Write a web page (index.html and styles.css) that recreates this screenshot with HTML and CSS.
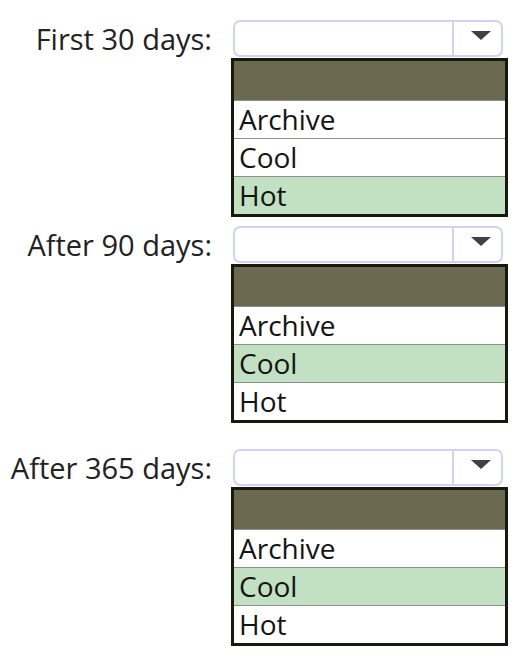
FILE: index.html
```html
<!DOCTYPE html>
<html lang="en">
<head>
    <meta charset="UTF-8">
    <meta name="viewport" content="width=device-width, initial-scale=1.0">
    <title>Storage Tiers</title>
    <link rel="stylesheet" href="styles.css">
</head>
<body>
    <div class="form">
        <div class="field">
            <span class="label">First 30 days:</span>
            <div class="control">
                <div class="select">
                    <span class="value"></span>
                    <span class="arrow"></span>
                </div>
                <ul class="list">
                    <li class="head"></li>
                    <li>Archive</li>
                    <li>Cool</li>
                    <li class="picked">Hot</li>
                </ul>
            </div>
        </div>

        <div class="field">
            <span class="label">After 90 days:</span>
            <div class="control">
                <div class="select">
                    <span class="value"></span>
                    <span class="arrow"></span>
                </div>
                <ul class="list">
                    <li class="head"></li>
                    <li>Archive</li>
                    <li class="picked">Cool</li>
                    <li>Hot</li>
                </ul>
            </div>
        </div>

        <div class="field spaced">
            <span class="label">After 365 days:</span>
            <div class="control">
                <div class="select">
                    <span class="value"></span>
                    <span class="arrow"></span>
                </div>
                <ul class="list">
                    <li class="head"></li>
                    <li>Archive</li>
                    <li class="picked">Cool</li>
                    <li>Hot</li>
                </ul>
            </div>
        </div>
    </div>
</body>
</html>
```

FILE: styles.css
```css
body {
    margin: 0;
    background-color: #ffffff;
    font-family: "Open Sans", "Noto Sans", sans-serif;
    color: #1e1e1e;
}
.form {
    display: flex;
    flex-direction: column;
    gap: 9px;
    padding-top: 20px;
}
.field {
    display: grid;
    grid-template-columns: 212px 277px;
    column-gap: 19px;
    align-items: start;
}
.field.spaced {
    margin-top: 17px;
}
.label {
    height: 37px;
    line-height: 37px;
    text-align: right;
    font-size: 29px;
    color: #222222;
    white-space: nowrap;
}
.select {
    display: flex;
    height: 37px;
    margin: 0 5px 0 2px;
    box-sizing: border-box;
    border: 2px solid #d2d2f4;
    border-radius: 7px;
    background-color: #ffffff;
}
.value {
    flex: 1;
    border-right: 2px solid #d2d2f4;
}
.arrow {
    width: 47px;
    display: flex;
    justify-content: center;
    align-items: center;
}
.arrow::before {
    content: "";
    margin: -6px 0 0 6px;
    border-left: 10px solid transparent;
    border-right: 10px solid transparent;
    border-top: 9px solid #404048;
}
.list {
    list-style: none;
    margin: 1px 0 0;
    padding: 0;
    border: 3px solid #161a0c;
}
.list li {
    height: 37px;
    line-height: 37px;
    padding-left: 5px;
    font-size: 28px;
    color: #141414;
    border-top: 1px solid #8e8e8e;
    background-color: #ffffff;
}
.list li.head {
    height: 39px;
    border-top: none;
    background-color: #6b6a50;
}
.list li.picked {
    background-color: #c2e0c2;
}
```
